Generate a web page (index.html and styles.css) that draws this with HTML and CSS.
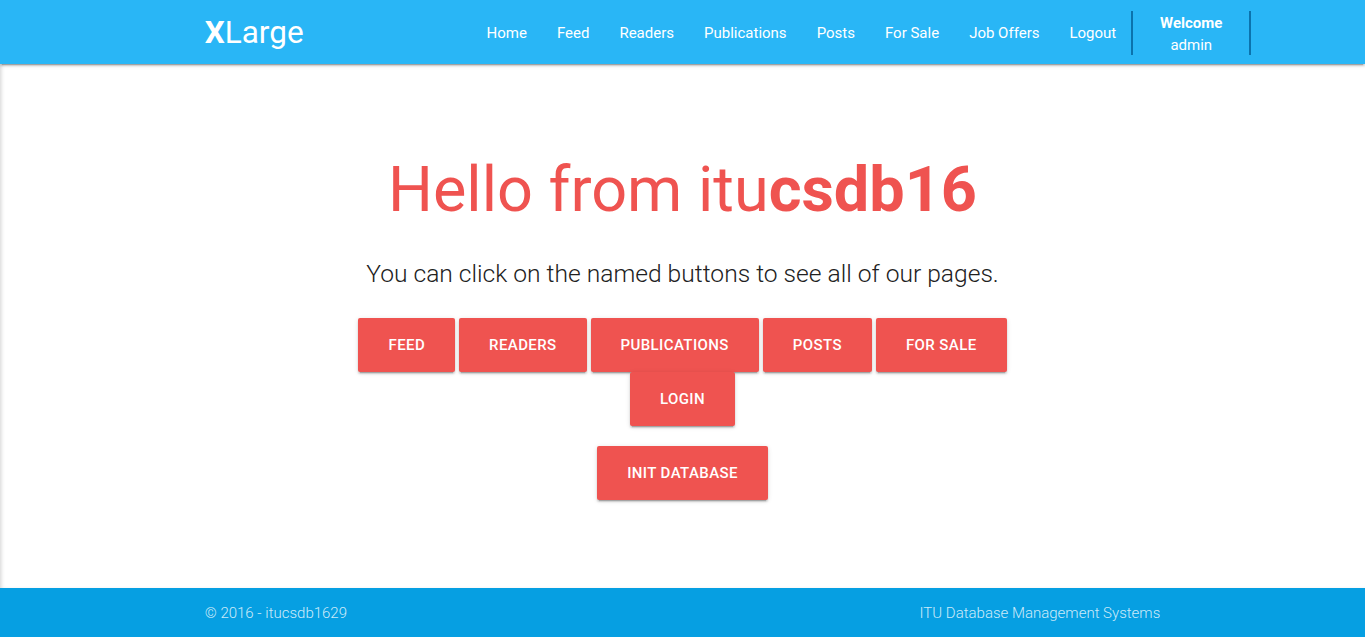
FILE: index.html
```html
<!DOCTYPE html>
<html lang="en">
<head>
<meta charset="utf-8">
<title>XLarge</title>
<link rel="stylesheet" href="styles.css">
</head>
<body>
<nav class="navbar">
  <div class="nav-wrapper">
    <a class="brand-logo" href="#"><b>X</b>Large</a>
    <ul class="nav-links">
      <li><a href="#">Home</a></li>
      <li><a href="#">Feed</a></li>
      <li><a href="#">Readers</a></li>
      <li><a href="#">Publications</a></li>
      <li><a href="#">Posts</a></li>
      <li><a href="#">For Sale</a></li>
      <li><a href="#">Job Offers</a></li>
      <li><a href="#">Logout</a></li>
      <li class="welcome"><strong>Welcome</strong><span>admin</span></li>
    </ul>
  </div>
</nav>
<main class="main">
  <h1 class="title">Hello from itu<span class="strong">csdb16</span></h1>
  <h5 class="subtitle">You can click on the named buttons to see all of our pages.</h5>
  <div class="btn-group">
    <a class="btn" href="#">Feed</a>
    <a class="btn" href="#">Readers</a>
    <a class="btn" href="#">Publications</a>
    <a class="btn" href="#">Posts</a>
    <a class="btn" href="#">For Sale</a>
    <a class="btn" href="#">Login</a>
  </div>
  <div class="btn-init">
    <a class="btn" href="#">Init Database</a>
  </div>
</main>
<footer class="footer">
  <div class="footer-inner">
    <span>© 2016 - itucsdb1629</span>
    <span>ITU Database Management Systems</span>
  </div>
</footer>
</body>
</html>
```
FILE: styles.css
```css
* { box-sizing: border-box; }
html, body { margin: 0; padding: 0; height: 100%; }
body {
  font-family: Roboto, "Liberation Sans", sans-serif;
  display: flex;
  flex-direction: column;
  min-height: 100vh;
  background: #fff;
  color: rgba(0,0,0,0.87);
}
a { text-decoration: none; }
.navbar {
  height: 64px;
  background: #29b6f6;
  box-shadow: 0 2px 2px 0 rgba(0,0,0,.14), 0 1px 5px 0 rgba(0,0,0,.12), 0 3px 1px -2px rgba(0,0,0,.2);
  position: relative;
  z-index: 2;
  flex: none;
}
.nav-wrapper {
  width: 70%;
  margin: 0 auto;
  height: 64px;
  display: flex;
  justify-content: space-between;
  align-items: center;
}
.brand-logo {
  color: #fff;
  font-size: 31.5px;
  line-height: 64px;
  font-weight: 400;
  padding-top: 2px;
}
.brand-logo b { font-weight: 700; }
.nav-links {
  list-style: none;
  margin: 0 -91px 0 0;
  padding: 0;
  display: flex;
  align-items: center;
  height: 64px;
}
.nav-links a {
  display: block;
  padding: 1px 15px 0;
  color: #fff;
  font-size: 15px;
  line-height: 64px;
}
.welcome {
  width: 120px;
  height: 44px;
  margin-top: 2px;
  border-left: 2px solid #0b73ad;
  border-right: 2px solid #0b73ad;
  display: flex;
  flex-direction: column;
  align-items: center;
  justify-content: center;
  padding-top: 2px;
  color: #fff;
  font-size: 15px;
  line-height: 22px;
}
.welcome strong { font-weight: 700; }
.main {
  flex: 1;
  text-align: center;
  box-shadow: inset 3px 0 4px -2px rgba(0,0,0,0.18);
}
.title {
  margin: 91px 0 0;
  font-size: 63px;
  line-height: 69.3px;
  font-weight: 400;
  color: #ef5350;
}
.title .strong { font-weight: 700; }
.subtitle {
  margin: 36px 0 0;
  font-size: 24.6px;
  line-height: 27px;
  font-weight: 300;
  color: #212121;
}
.btn-group {
  width: 700px;
  margin: 31px auto 0;
  display: flex;
  flex-wrap: wrap;
  justify-content: center;
  column-gap: 4px;
}
.btn {
  display: inline-block;
  height: 54px;
  line-height: 54px;
  padding: 0 30px;
  background: #ef5350;
  color: #fff;
  font-size: 15px;
  font-weight: 500;
  text-transform: uppercase;
  letter-spacing: 0.4px;
  border-radius: 2px;
  box-shadow: 0 2px 2px 0 rgba(0,0,0,.14), 0 1px 5px 0 rgba(0,0,0,.12), 0 3px 1px -2px rgba(0,0,0,.2);
}
.btn-init {
  margin-top: 20px;
  display: flex;
  justify-content: center;
}
.footer {
  flex: none;
  height: 49px;
  background: #069fe2;
}
.footer-inner {
  width: 70%;
  margin: 0 auto;
  height: 49px;
  display: flex;
  justify-content: space-between;
  align-items: center;
  color: rgba(255,255,255,0.8);
  font-size: 15px;
  font-weight: 300;
}
```
